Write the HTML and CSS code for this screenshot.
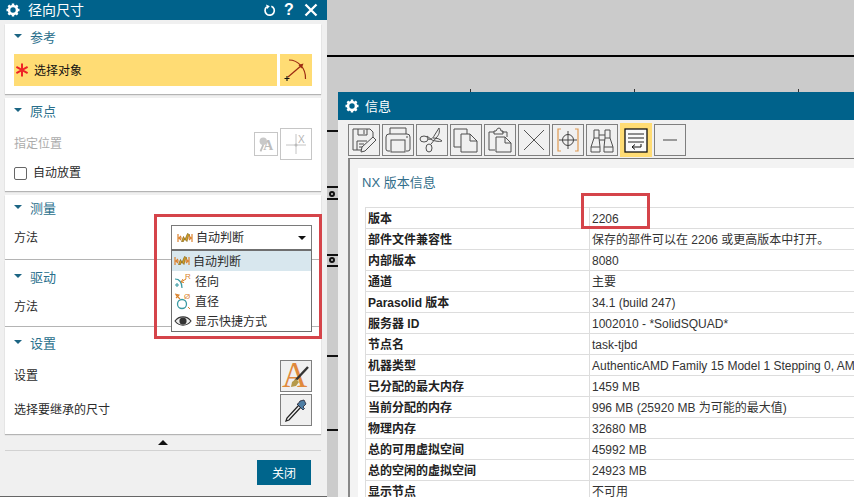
FILE: index.html
```html
<!DOCTYPE html>
<html lang="zh-CN">
<head>
    <meta charset="UTF-8">
    <meta name="viewport" content="width=device-width, initial-scale=1.0">
    <title>径向尺寸</title>
    <link rel="stylesheet" href="styles.css">
</head>
<body>
    <svg class="sprite" aria-hidden="true">
        <symbol id="gear" viewBox="0 0 14 14">
            <circle cx="7" cy="7" r="4" fill="none" stroke="#fff" stroke-width="2.6"/>
            <path d="M7 .5v2M7 11.5v2M.5 7h2M11.5 7h2M2.4 2.4l1.4 1.4M10.2 10.2l1.4 1.4M2.4 11.6l1.4-1.4M10.2 3.8l1.4-1.4" stroke="#fff" stroke-width="2.4"/>
        </symbol>
        <symbol id="auto" viewBox="0 0 16 12">
            <path d="M1 2v8M15 2v8M1 6h4M11 6h4M2 6l2-2M2 6l2 2M14 6l-2-2M14 6l-2 2" fill="none" stroke="#dc8330" stroke-width="1.200"/>
            <path d="M4.500 9.500l2-5 1.500 3 2.500-6 2.500 1.500-2 1.500-1 5-2.500-2.500-1 2.500z" fill="#d9a21f" stroke="#80631a" stroke-width=".7"/>
        </symbol>
    </svg>

    <section class="dialog">
        <header class="dialog-title">
            <svg class="gear"><use href="#gear"/></svg>
            <span class="dialog-name">径向尺寸</span>
            <svg class="title-icon" viewBox="0 0 14 14"><path d="M4 3.2A5 5 0 1 0 9 2.400" fill="none" stroke="#fff" stroke-width="1.800"/><path d="M2.500 .8l4.500 .6-1.800 3.800z" fill="#fff" transform="rotate(20 4 3)"/></svg>
            <span class="help">?</span>
            <svg class="title-icon close-x" viewBox="0 0 14 14"><path d="M1.500 1.500l11 11M12.500 1.500l-11 11" stroke="#fff" stroke-width="2.300"/></svg>
        </header>

        <div class="dialog-body">
            <div class="card">
                <h3 class="card-head"><i class="caret"></i>参考</h3>
                <div class="row">
                    <div class="pick">
                        <svg class="star" viewBox="0 0 14 14"><path d="M7 .5v13M1.400 3.800l11.200 6.400M12.600 3.800L1.400 10.200" stroke="#ee2327" stroke-width="2"/></svg>
                        <span>选择对象</span>
                    </div>
                    <div class="pick-icon">
                        <svg class="icon32" viewBox="0 0 32 32">
                            <path d="M9 6C18 6 26 14 25.500 25" fill="none" stroke="#9c2a12" stroke-width="1.200"/>
                            <path d="M8 23L22 11" stroke="#9c2a12" stroke-width="1.200"/>
                            <path d="M23.500 9.500l-5 1.500 3 3.500z" fill="#9c2a12"/>
                            <path d="M4.500 24.500h5M7 22v5" stroke="#111" stroke-width="1.100"/>
                        </svg>
                    </div>
                </div>
            </div>

            <div class="card card-origin">
                <h3 class="card-head"><i class="caret"></i>原点</h3>
                <div class="row">
                    <span class="muted">指定位置</span>
                    <div class="tools">
                        <button class="tool tool-small tool-off">
                            <svg viewBox="0 0 24 24"><circle cx="9" cy="9" r="4" fill="#c9c9c9"/><path d="M9 13l-3 7" stroke="#c0c0c0" stroke-width="2"/><text x="9" y="19" class="off-a">A</text></svg>
                        </button>
                        <button class="tool tool-off">
                            <svg class="icon32" viewBox="0 0 30 30"><path d="M5 16h20M15 5v20" stroke="#c4c4c4" stroke-width="1"/><circle cx="15" cy="16" r="1.500" fill="#bbb"/><text x="17" y="14" class="off-x">X</text></svg>
                        </button>
                    </div>
                </div>
                <label class="check-row"><i class="check"></i><span>自动放置</span></label>
            </div>

            <div class="card card-measure">
                <h3 class="card-head"><i class="caret"></i>测量</h3>
                <div class="row row-select">
                    <span>方法</span>
                    <div class="select">
                        <svg class="auto"><use href="#auto"/></svg>
                        <span>自动判断</span>
                        <i class="select-arrow"></i>
                        <ul class="menu">
                            <li class="menu-on"><svg class="auto"><use href="#auto"/></svg><span>自动判断</span></li>
                            <li>
                                <svg class="menu-icon" viewBox="0 0 18 18">
                                    <path d="M1 7c4 0 7 3 7 9" fill="none" stroke="#3b9aa3" stroke-width="1.200"/>
                                    <path d="M1 13h4M3 11v4" stroke="#3b9aa3" stroke-width="1.100"/>
                                    <path d="M7 10l5-3M9 7l-2 3 3 .5" fill="none" stroke="#d9822b" stroke-width="1"/>
                                    <text x="11" y="6.500" class="menu-letter">R</text>
                                </svg><span>径向</span>
                            </li>
                            <li>
                                <svg class="menu-icon" viewBox="0 0 18 18">
                                    <circle cx="8" cy="12" r="4.500" fill="none" stroke="#3b9aa3" stroke-width="1.300"/>
                                    <path d="M1 2l4 1-3 3M6 7L2 3" fill="none" stroke="#d9822b" stroke-width="1.100"/>
                                    <text x="10" y="6.500" class="menu-letter">Ø</text>
                                    <path d="M14 15l2 2" stroke="#d9822b" stroke-width="1"/>
                                </svg><span>直径</span>
                            </li>
                            <li>
                                <svg class="menu-icon" viewBox="0 0 18 18">
                                    <path d="M1 9c4-5.500 12-5.500 16 0-4 5.500-12 5.500-16 0z" fill="#eee" stroke="#333" stroke-width="1.100"/>
                                    <circle cx="9" cy="9" r="3.600" fill="#333"/>
                                </svg><span>显示快捷方式</span>
                            </li>
                        </ul>
                    </div>
                </div>
            </div>

            <div class="card card-tight">
                <h3 class="card-head"><i class="caret"></i>驱动</h3>
                <div class="row row-select">
                    <span>方法</span>
                </div>
            </div>

            <div class="card card-tight card-last">
                <h3 class="card-head"><i class="caret"></i>设置</h3>
                <div class="row">
                    <span>设置</span>
                    <button class="tool">
                        <svg class="icon32 icon-open" viewBox="0 0 30 30">
                            <text x="1" y="26" class="style-a">A</text>
                            <path d="M27 6L14 20" stroke="#333" stroke-width="2.400"/>
                            <path d="M15 18l-4 3-1 5 5-1 3-4z" fill="#b59a4a"/>
                        </svg>
                    </button>
                </div>
                <div class="row row-next">
                    <span>选择要继承的尺寸</span>
                    <button class="tool">
                        <svg class="icon32" viewBox="0 0 30 30">
                            <path d="M18 10L6 23l-1 3 3-1 12-13z" fill="#f4f4f4" stroke="#222" stroke-width="1.300"/>
                            <path d="M16 9l6 6 1.500-1.500-1.500-1.500 3-3-2-4-4 1-2 3z" fill="#4d7da3" stroke="#223" stroke-width=".8"/>
                        </svg>
                    </button>
                </div>
            </div>

            <div class="collapse"><i class="collapse-arrow"></i></div>
            <div class="dialog-foot"><button class="btn-close">关闭</button></div>
        </div>
    </section>

    <main class="canvas">
        <i class="sheet-line"></i>
        <i class="tick" style="left: 143px"></i>
        <i class="tick" style="left: 307px"></i>
        <i class="tick" style="left: 471px"></i>
        <i class="side-line" style="top: 130px"></i>
        <i class="side-line" style="top: 186px"></i>
        <i class="side-dot" style="top: 191px"></i>
        <i class="side-line" style="top: 198px"></i>
        <i class="side-line" style="top: 254px"></i>
        <i class="side-dot" style="top: 257px"></i>
        <i class="side-line" style="top: 265px"></i>
        <i class="side-line" style="top: 355px"></i>
        <i class="side-line" style="top: 429px"></i>

        <section class="info">
            <header class="info-title">
                <svg class="gear"><use href="#gear"/></svg>
                <span>信息</span>
            </header>
            <div class="toolbar">
                <button class="tool">
                    <svg class="icon32" viewBox="0 0 30 30"><g class="line"><path d="M4 4h17l3 3v6M4 4v21h8"/><path d="M9 4v6h9V4M15 5v4"/><path d="M8 25v-9h10M10 19h5M10 22h3"/><path d="M12 27l1-5 11-10 3 3-11 11z"/></g></svg>
                </button>
                <button class="tool">
                    <svg class="icon32" viewBox="0 0 30 30"><g class="line"><path d="M7 9V3h16v6"/><path d="M7 26H5q-2 0-2-2V12q0-3 3-3h18q3 0 3 3v12q0 2-2 2h-2"/><rect x="8" y="15" width="14" height="12"/><path d="M23 12h2"/></g></svg>
                </button>
                <button class="tool">
                    <svg class="icon32" viewBox="0 0 30 30"><g class="line"><ellipse cx="7" cy="14" rx="4" ry="3"/><ellipse cx="12" cy="23" rx="3" ry="4"/><path d="M11 14c3 1 5-1 6-3l5-8c1 4 0 7-3 10l-5 6"/><path d="M10 11l5 4c3 1 7 2 10 1-2-2-5-3-9-3"/></g></svg>
                </button>
                <button class="tool">
                    <svg class="icon32" viewBox="0 0 30 30"><g class="line"><path d="M10 22H3V4h13v5"/><path d="M10 9h9l7 7v11H10zM19 9v7h7"/></g></svg>
                </button>
                <button class="tool">
                    <svg class="icon32" viewBox="0 0 30 30"><g class="line"><path d="M10 25H4V7h5M17 7h5v5"/><path d="M9 9V6h2q1-3 3-3t2 3h2v3z"/><path d="M11 12h9l6 6v9H11zM20 12v6h6"/></g></svg>
                </button>
                <button class="tool">
                    <svg class="icon32" viewBox="0 0 30 30"><path d="M5 5l20 20M25 5L5 25" stroke="#555" fill="none"/></svg>
                </button>
                <button class="tool">
                    <svg class="icon32" viewBox="0 0 30 30"><path d="M8 4H5v22h3M22 4h3v22h-3" fill="none" stroke="#e09a52" stroke-width="1.200"/><circle cx="15" cy="15" r="5.500" fill="none" stroke="#444"/><path d="M15 6v18M6 15h18" stroke="#444"/></svg>
                </button>
                <button class="tool">
                    <svg class="icon32" viewBox="0 0 30 30"><g class="line"><path d="M7 5h5v8H7zM18 5h5v8h-5z"/><path d="M7 13l-3 9v5h9v-5l-1-9M23 13l3 9v5h-9v-5l1-9"/><path d="M12 10h6M12 15h6M4 22h9M17 22h9"/></g></svg>
                </button>
                <button class="tool tool-on">
                    <svg class="icon32" viewBox="0 0 32 32"><rect x="5" y="5" width="22" height="23" fill="#fafafa" stroke="#111" stroke-width="1.300"/><path d="M8 10h16M8 14h16M8 18h16" stroke="#222"/><path d="M21 20v3h-9M15 20.500l-3 2.500 3 2.500" fill="none" stroke="#111"/></svg>
                </button>
                <button class="tool">
                    <svg class="icon32" viewBox="0 0 30 30"><path d="M8 15h14" stroke="#444"/></svg>
                </button>
            </div>

            <div class="frame">
                <div class="sheet">
                    <h2 class="sheet-title">NX 版本信息</h2>
                    <table class="facts">
                        <tr><th>版本</th><td>2206</td></tr>
                        <tr><th>部件文件兼容性</th><td>保存的部件可以在 2206 或更高版本中打开。</td></tr>
                        <tr><th>内部版本</th><td>8080</td></tr>
                        <tr><th>通道</th><td>主要</td></tr>
                        <tr><th>Parasolid 版本</th><td>34.1 (build 247)</td></tr>
                        <tr><th>服务器 ID</th><td>1002010 - *SolidSQUAD*</td></tr>
                        <tr><th>节点名</th><td>task-tjbd</td></tr>
                        <tr><th>机器类型</th><td>AuthenticAMD Family 15 Model 1 Stepping 0, AMD64</td></tr>
                        <tr><th>已分配的最大内存</th><td>1459 MB</td></tr>
                        <tr><th>当前分配的内存</th><td>996 MB (25920 MB 为可能的最大值)</td></tr>
                        <tr><th>物理内存</th><td>32680 MB</td></tr>
                        <tr><th>总的可用虚拟空间</th><td>45992 MB</td></tr>
                        <tr><th>总的空闲的虚拟空间</th><td>24923 MB</td></tr>
                        <tr><th>显示节点</th><td>不可用</td></tr>
                    </table>
                </div>
            </div>
        </section>
    </main>

    <div class="mark mark-menu"></div>
    <div class="mark mark-version"></div>
</body>
</html>
```

FILE: styles.css
```css
* {
    box-sizing: border-box;
}
html, body {
    height: 100%;
}
body {
    position: relative;
    display: flex;
    width: 854px;
    height: 497px;
    margin: 0;
    overflow: hidden;
    font-family: 'Liberation Sans', 'Noto Sans CJK SC', sans-serif;
    font-size: 12px;
    color: #2b2b2b;
    background-color: #cbcbcb;
}
.sprite {
    display: none;
}
button {
    padding: 0;
    font-family: inherit;
}

/* left dialog */
.dialog {
    display: flex;
    flex-direction: column;
    flex: 0 0 327px;
    height: 497px;
    background-color: #f0f0f0;
    border-bottom: 1px solid #666;
}
.dialog-title {
    display: flex;
    align-items: center;
    flex: 0 0 20px;
    padding: 0 9px 0 6px;
    line-height: 16px;
    color: #ffffff;
    background-color: #00628b;
}
.gear {
    flex: 0 0 14px;
    width: 14px;
    height: 14px;
}
.dialog-name {
    flex: 1;
    margin-left: 8px;
    padding-bottom: 1px;
    font-size: 14px;
}
.title-icon {
    width: 13px;
    height: 13px;
}
.help {
    width: 14px;
    margin: 0 8px 0 6px;
    font-size: 16px;
    font-weight: bold;
    text-align: center;
}
.close-x {
    width: 14px;
    height: 14px;
}
.dialog-body {
    flex: 1;
    padding: 4px 6px 0 5px;
}
.card {
    padding: 0 9px 8px;
    margin-bottom: 4px;
    background: #ffffff;
    box-shadow: 0 1px 1px rgba(0, 0, 0, 0.25);
}
.card-origin {
    padding-bottom: 5px;
}
.card-measure {
    margin-bottom: 1px;
    padding-bottom: 9px;
}
.card-tight {
    padding-top: 4px;
    padding-bottom: 7px;
    margin-bottom: 1px;
}
.card-last {
    padding-top: 3px;
    padding-bottom: 8px;
    margin-bottom: 0;
}
.card-head {
    display: flex;
    align-items: center;
    height: 26px;
    padding-bottom: 2px;
    margin: 0 0 4px;
    font-size: 13px;
    font-weight: normal;
    color: #2a6f8c;
}
.caret {
    width: 0;
    height: 0;
    margin-right: 8px;
    border-style: solid;
    border-width: 4px 4px 0;
    border-color: #1c6583 transparent transparent;
}
.row {
    display: flex;
    align-items: center;
    justify-content: space-between;
    height: 32px;
}
.row > span, .check-row span {
    padding-bottom: 3px;
}
.row-select {
    height: 25px;
}
.row-select > span {
    padding-bottom: 2px;
}
.row-next {
    margin-top: 2px;
}
.pick {
    display: flex;
    flex: 0 0 263px;
    align-items: center;
    height: 32px;
    padding-left: 1px;
    color: #111;
    background-color: #ffdc74;
}
.pick span {
    padding-bottom: 2px;
}
.star {
    width: 14px;
    height: 14px;
    margin-right: 5px;
}
.pick-icon {
    width: 32px;
    height: 32px;
    background-color: #ffdc74;
}
.icon32 {
    display: block;
    width: 100%;
    height: 100%;
}
.icon-open {
    overflow: visible;
}
.muted {
    color: #ababab;
}
.tools {
    display: flex;
    align-items: center;
    gap: 2px;
}
.tool {
    flex: 0 0 32px;
    width: 32px;
    height: 32px;
    background-color: #f0f0f0;
    border: 1px solid #7f7f7f;
}
.tool-off {
    background-color: #ffffff;
    border-color: #c6c6c6;
}
.tool-small {
    flex-basis: 24px;
    width: 24px;
    height: 24px;
}
.tool-small svg {
    display: block;
}
.off-a {
    font-family: 'Liberation Serif', serif;
    font-size: 15px;
    font-weight: bold;
    fill: #bdbdbd;
}
.off-x {
    font-size: 10px;
    fill: #b4b4b4;
}
.check-row {
    display: flex;
    align-items: center;
    height: 26px;
}
.check {
    width: 13px;
    height: 13px;
    margin-right: 6px;
    border: 1px solid #666;
    border-radius: 2px;
}

/* select + open menu */
.select {
    position: relative;
    display: flex;
    align-items: center;
    width: 141px;
    height: 25px;
    padding-left: 5px;
    background: #ffffff;
    border: 1px solid #7a7a7a;
}
.select > span, .menu span {
    padding-bottom: 2px;
}
.auto {
    flex: 0 0 16px;
    width: 16px;
    height: 12px;
    margin-right: 3px;
}
.select-arrow {
    position: absolute;
    top: 10px;
    right: 5px;
    width: 0;
    height: 0;
    border-style: solid;
    border-width: 4px 4px 0;
    border-color: #111 transparent transparent;
}
.menu {
    position: absolute;
    top: 23px;
    left: -1px;
    z-index: 2;
    width: 141px;
    padding: 0;
    margin: 0;
    list-style: none;
    background: #ffffff;
    border: 1px solid #6f6f6f;
    border-top-width: 2px;
}
.menu li {
    display: flex;
    align-items: center;
    height: 20px;
    padding-left: 2px;
}
.menu-on {
    background-color: #d8e7ee;
}
.menu-icon {
    flex: 0 0 18px;
    width: 18px;
    height: 18px;
    margin-right: 3px;
}
.menu-letter {
    font-size: 8px;
    fill: #d9822b;
}
.style-a {
    font-family: 'Liberation Serif', serif;
    font-size: 35px;
    fill: #e08a3c;
}

/* dialog bottom */
.collapse {
    display: flex;
    align-items: center;
    justify-content: center;
    height: 17px;
    border-bottom: 1px solid #d2d2d2;
}
.collapse-arrow {
    width: 0;
    height: 0;
    border-style: solid;
    border-width: 0 5px 5px;
    border-color: transparent transparent #111;
}
.dialog-foot {
    display: flex;
    justify-content: flex-end;
    padding: 9px 10px 0 0;
}
.btn-close {
    width: 54px;
    height: 25px;
    font-size: 12px;
    color: #ffffff;
    background-color: #00658c;
    border: none;
}

/* canvas behind the info window */
.canvas {
    position: relative;
    flex: 1;
    overflow: hidden;
}
.sheet-line {
    position: absolute;
    top: 55px;
    left: 0;
    width: 100%;
    height: 2px;
    background: #000;
}
.tick {
    position: absolute;
    top: 89px;
    width: 1px;
    height: 3px;
    background: #333;
}
.side-line {
    position: absolute;
    left: 0;
    width: 11px;
    height: 2px;
    background: #111;
}
.side-dot {
    position: absolute;
    left: 2px;
    width: 6px;
    height: 6px;
    border: 2px solid #111;
    border-radius: 50%;
}

/* info window */
.info {
    position: absolute;
    top: 92px;
    left: 11px;
    right: 0;
    bottom: 0;
    display: flex;
    flex-direction: column;
    overflow: hidden;
    background-color: #f0f0f0;
}
.info-title {
    display: flex;
    align-items: center;
    flex: 0 0 28px;
    gap: 6px;
    padding-left: 7px;
    font-size: 13px;
    color: #ffffff;
    background-color: #00628b;
}
.info-title span {
    padding-bottom: 2px;
}
.toolbar {
    display: flex;
    flex: 0 0 38px;
    align-items: flex-start;
    gap: 2px;
    padding: 4px 0 0 10px;
}
.tool-on {
    height: 34px;
    margin-top: -1px;
    background-color: #ffdc74;
    border: none;
}
.line {
    fill: none;
    stroke: #4f4f4f;
    stroke-width: 1;
}
.frame {
    flex: 1;
    width: 530px;
    padding: 9px 0 0 8px;
    margin-left: 10px;
    background-color: #f3f3f3;
    border-top: 1px solid #777;
    border-left: 2px solid #888;
}
.sheet {
    height: 100%;
    padding: 3px 0 0 7px;
    background: #ffffff;
}
.sheet-title {
    height: 24px;
    margin: 0 0 12px -3px;
    font-size: 13px;
    font-weight: normal;
    line-height: 24px;
    color: #336e8a;
}
.facts {
    width: 640px;
    table-layout: fixed;
    border-collapse: collapse;
}
.facts th, .facts td {
    height: 21px;
    padding: 1px 2px 0;
    font-size: 12px;
    line-height: 16px;
    color: #333;
    text-align: left;
    white-space: nowrap;
    border: 1px solid #dddddd;
}
.facts th {
    width: 224px;
    color: #222;
}

/* red notes over the screenshot */
.mark {
    position: absolute;
    z-index: 3;
    border: 3px solid #d5444a;
    pointer-events: none;
}
.mark-menu {
    top: 214px;
    left: 154px;
    width: 168px;
    height: 125px;
}
.mark-version {
    top: 193px;
    left: 581px;
    width: 69px;
    height: 36px;
}
```
